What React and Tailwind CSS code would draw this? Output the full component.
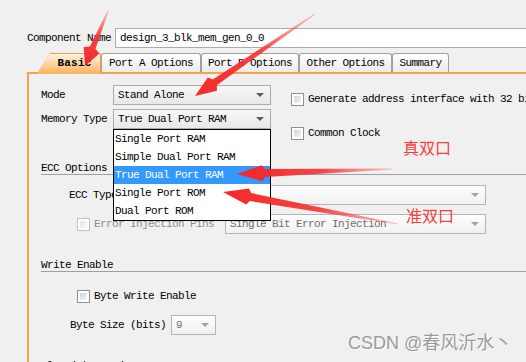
import React from 'react';

const arrows = [
	{ x1: 108, y1: 11, x2: 85, y2: 66, hl: 20, hw: 17, sw: 6 },
	{ x1: 315, y1: 14, x2: 195, y2: 96, hl: 24, hw: 16, sw: 7 },
	{ x1: 392, y1: 169, x2: 237, y2: 174, hl: 28, hw: 16, sw: 8 },
	{ x1: 398, y1: 224, x2: 223, y2: 192, hl: 28, hw: 16, sw: 8 },
];

const arrowPoints = ({ x1, y1, x2, y2, hl, hw, sw }) => {
	const dx = x2 - x1;
	const dy = y2 - y1;
	const len = Math.hypot(dx, dy);
	const ux = dx / len;
	const uy = dy / len;
	const nx = -uy;
	const ny = ux;
	const bx = x2 - ux * hl;
	const by = y2 - uy * hl;
	const pts = [
		[x1 + nx * 0.6, y1 + ny * 0.6],
		[bx + (nx * sw) / 2, by + (ny * sw) / 2],
		[bx + (nx * hw) / 2 + ux * 3, by + (ny * hw) / 2 + uy * 3],
		[x2, y2],
		[bx - (nx * hw) / 2 + ux * 3, by - (ny * hw) / 2 + uy * 3],
		[bx - (nx * sw) / 2, by - (ny * sw) / 2],
		[x1 - nx * 0.6, y1 - ny * 0.6],
	];
	return pts.map((p) => p.map((v) => v.toFixed(1)).join(',')).join(' ');
};

const Combo = ({ value, disabled, className = '' }) => (
	<div
		className={`flex items-center shrink-0 h-[20px] border pl-[4px] pr-[6px] ${
			disabled
				? 'border-[#b4b4b4] bg-linear-to-b from-[#fdfdfd] to-[#f1f1f1] text-[#6e6e6e]'
				: 'border-[#acacac] bg-linear-to-b from-[#f7f7f7] to-[#e8e8e8] text-black'
		} ${className}`}>
		<span className="flex-1 whitespace-nowrap overflow-hidden">{value}</span>
		<svg width="8" height="4" viewBox="0 0 8 4">
			<path d="M0 0 L8 0 L4 4 Z" fill={disabled ? '#a3a3a3' : '#5a5a5a'} />
		</svg>
	</div>
);

const Check = ({ label, disabled }) => (
	<div className="flex items-center gap-[4px] whitespace-nowrap">
		<div
			className={`w-[13px] h-[13px] shrink-0 border bg-white p-[2px] ${
				disabled ? 'border-[#c2c2c2]' : 'border-[#8e8f8f]'
			}`}>
			<div
				className={`w-full h-full bg-linear-to-br ${
					disabled ? 'from-[#e6e6e6] to-[#fafafa]' : 'from-[#cfd2d6] to-[#f7f7f7]'
				}`}
			/>
		</div>
		<span className={disabled ? 'text-[#8d8d8d]' : ''}>{label}</span>
	</div>
);

const Tab = ({ label, className = '' }) => (
	<div
		className={`h-[19px] shrink-0 flex items-center justify-center border border-b-0 border-[#a0a0a0] rounded-t-[3px] bg-linear-to-b from-white to-[#ebebeb] whitespace-nowrap ${className}`}>
		{label}
	</div>
);

const items = [
	'Single Port RAM',
	'Simple Dual Port RAM',
	'True Dual Port RAM',
	'Single Port ROM',
	'Dual Port ROM',
];

export default function App() {
	return (
		<div className="relative w-[526px] h-[362px] overflow-hidden bg-[#f0f0f0] text-black font-['Liberation_Mono',monospace] text-[11px] tracking-[-0.6px] leading-[13px]">
			{/* component name */}
			<div className="flex items-center pl-[27px] pt-[28px]">
				<span className="w-[88px] shrink-0 whitespace-nowrap">Component Name</span>
				<div className="h-[20px] w-[430px] shrink-0 flex items-center pl-[4px] border border-[#ababab] bg-white whitespace-nowrap">
					design_3_blk_mem_gen_0_0
				</div>
			</div>

			{/* tabs */}
			<div className="flex items-end h-[19px] mt-[5px] pl-[37px]">
				<div className="relative z-10 w-[64px] h-[21px] -mb-[2px] shrink-0 bg-[#f0a040] pt-[1px] pr-[1px] [clip-path:polygon(13px_0,100%_0,100%_100%,0_100%)]">
					<div className="w-full h-full flex items-center justify-center pl-[12px] pb-[2px] font-bold tracking-[0.2px] bg-linear-to-b from-[#fff3df] to-[#f9b25a] [clip-path:polygon(12px_0,100%_0,100%_100%,0_100%)]">
						Basic
					</div>
				</div>
				<Tab label="Port A Options" className="w-[100px]" />
				<Tab label="Port B Options" className="w-[98px]" />
				<Tab label="Other Options" className="w-[93px]" />
				<Tab label="Summary" className="w-[57px]" />
			</div>

			{/* panel */}
			<div className="ml-[27px] h-[300px] border-t-2 border-l-2 border-[#f5a346] pl-[12px] pt-[11px]">
				<div className="flex h-[44px]">
					<div className="flex flex-col gap-[4px] shrink-0">
						<div className="flex items-center">
							<span className="w-[72px] shrink-0">Mode</span>
							<Combo className="w-[158px]" value="Stand Alone" />
						</div>
						<div className="flex items-center">
							<span className="w-[72px] shrink-0 whitespace-nowrap">Memory Type</span>
							<Combo className="w-[158px]" value="True Dual Port RAM" />
						</div>
					</div>
					<div className="flex flex-col gap-[21px] pl-[20px] pt-[8px]">
						<Check label="Generate address interface with 32 bits" />
						<Check label="Common Clock" />
					</div>
				</div>

				<div className="mt-[33px] h-[13px] border-b border-[#a0a0a0] leading-[12px] whitespace-nowrap">
					ECC Options
				</div>
				<div className="mt-[10px] flex items-center pl-[28px]">
					<span className="w-[156px] shrink-0 whitespace-nowrap">ECC Type</span>
					<Combo className="w-[261px]" value="No ECC" disabled />
				</div>
				<div className="mt-[9px] flex items-center pl-[36px]">
					<div className="w-[148px] shrink-0">
						<Check label="Error Injection Pins" disabled />
					</div>
					<Combo className="w-[261px]" value="Single Bit Error Injection" disabled />
				</div>

				<div className="mt-[25px] h-[13px] border-b border-[#a0a0a0] leading-[12px] whitespace-nowrap">
					Write Enable
				</div>
				<div className="mt-[18px] pl-[36px]">
					<Check label="Byte Write Enable" />
				</div>
				<div className="mt-[12px] flex items-center pl-[29px]">
					<span className="w-[101px] shrink-0 whitespace-nowrap">Byte Size (bits)</span>
					<Combo className="w-[45px]" value="9" disabled />
				</div>

				<div className="mt-[25px] whitespace-nowrap">Algorithm Options</div>
			</div>

			{/* open dropdown list */}
			<div className="absolute z-20 left-[113px] top-[129px] w-[158px] border border-black bg-white">
				{items.map((it, i) => (
					<div
						key={it}
						className={`h-[18px] leading-[18px] pl-[1px] whitespace-nowrap ${
							i === 2 ? 'bg-[#3399ff] text-white' : ''
						}`}>
						{it}
					</div>
				))}
			</div>

			{/* annotations */}
			<div className="absolute z-30 left-[403px] top-[139px] text-[16px] leading-[16px] tracking-normal text-[#ff3a3a] font-['Noto_Sans_CJK_SC',sans-serif]">
				真双口
			</div>
			<div className="absolute z-30 left-[406px] top-[207px] text-[16px] leading-[16px] tracking-normal text-[#ff3a3a] font-['Noto_Sans_CJK_SC',sans-serif]">
				准双口
			</div>

			<svg
				className="absolute inset-0 z-30 pointer-events-none"
				width="526"
				height="362"
				viewBox="0 0 526 362">
				<defs>
					{arrows.map((a, i) => (
						<linearGradient
							key={i}
							id={`ag${i}`}
							gradientUnits="userSpaceOnUse"
							x1={a.x1}
							y1={a.y1}
							x2={a.x2}
							y2={a.y2}>
							<stop offset="0" stopColor="#ff5a5a" stopOpacity="0.35" />
							<stop offset="0.45" stopColor="#f83030" stopOpacity="0.9" />
							<stop offset="1" stopColor="#f42828" />
						</linearGradient>
					))}
				</defs>
				{arrows.map((a, i) => (
					<polygon key={i} points={arrowPoints(a)} fill={`url(#ag${i})`} />
				))}
			</svg>

			{/* watermark */}
			<div className="absolute z-30 left-[348px] top-[331px] text-[18px] leading-[24px] tracking-normal text-[#9b9b9b] whitespace-nowrap font-['Liberation_Sans','Noto_Sans_CJK_SC',sans-serif] [text-shadow:1px_1px_1px_#ffffff]">
				CSDN @春风沂水丶
			</div>
		</div>
	);
}
